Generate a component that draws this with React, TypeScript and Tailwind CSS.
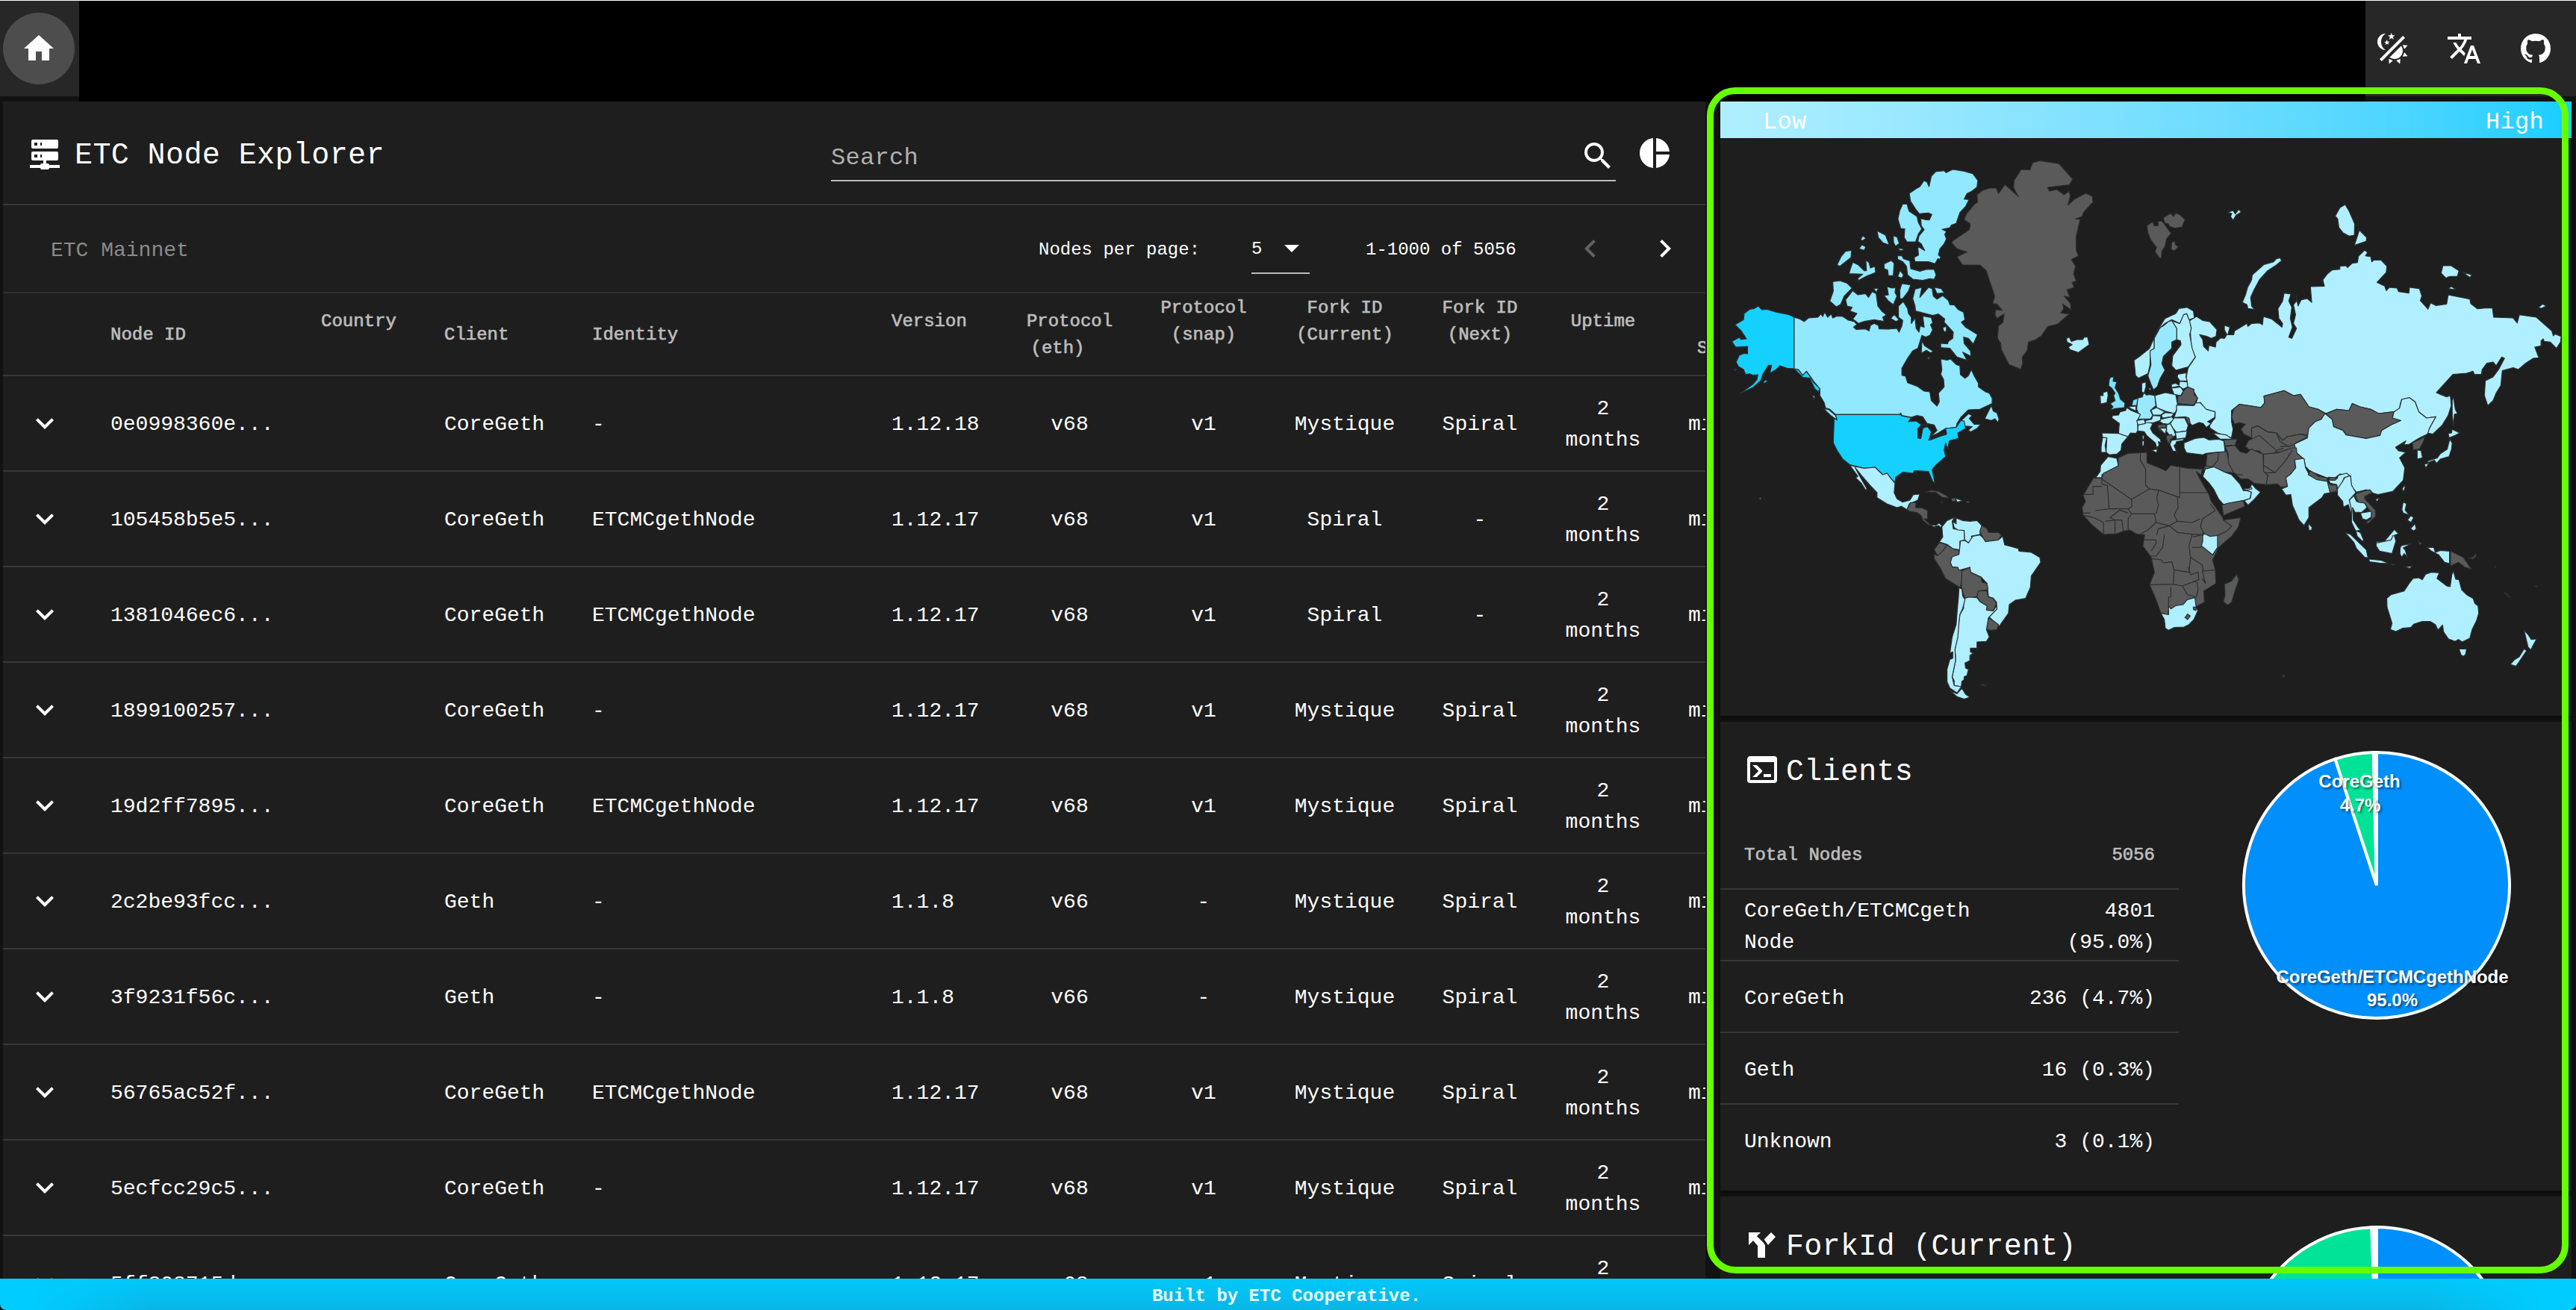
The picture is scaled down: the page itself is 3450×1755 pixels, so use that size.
import React from "react";

const ICONS = {
  home: "M10,20V14H14V20H19V12H22L12,3L2,12H5V20H10Z",
  theme:
    "M7.5,2C5.71,3.15 4.5,5.18 4.5,7.5C4.5,9.82 5.71,11.85 7.53,13C4.46,13 2,10.54 2,7.5A5.5,5.5 0 0,1 7.5,2M19.07,3.5L20.5,4.93L4.93,20.5L3.5,19.07L19.07,3.5M12.89,5.93L11.41,5L9.97,6L10.39,4.3L9,3.24L10.75,3.12L11.33,1.47L12,3.1L13.73,3.13L12.38,4.26L12.89,5.93M9.59,9.54L8.43,8.81L7.31,9.59L7.65,8.27L6.56,7.44L7.92,7.35L8.37,6.06L8.88,7.33L10.24,7.36L9.19,8.23L9.59,9.54M19,13.5A5.5,5.5 0 0,1 13.5,19C12.28,19 11.15,18.6 10.24,17.93L17.93,10.24C18.6,11.15 19,12.28 19,13.5M14.6,20.08L17.37,18.93L17.13,22.28L14.6,20.08M18.93,17.38L20.08,14.61L22.28,17.15L18.93,17.38M20.08,12.42L18.94,9.64L22.28,9.88L20.08,12.42M9.63,18.93L12.4,20.08L9.87,22.27L9.63,18.93Z",
  translate:
    "M12.87,15.07L10.33,12.56L10.36,12.53C12.1,10.59 13.34,8.36 14.07,6H17V4H10V2H8V4H1V6H12.17C11.5,7.92 10.44,9.75 9,11.35C8.07,10.32 7.3,9.19 6.69,8H4.69C5.42,9.63 6.42,11.17 7.67,12.56L2.58,17.58L4,19L9,14L12.11,17.11L12.87,15.07M18.5,10H16.5L12,22H14L15.12,19H19.87L21,22H23L18.5,10M15.88,17L17.5,12.67L19.12,17H15.88Z",
  github:
    "M12,2A10,10 0 0,0 2,12C2,16.42 4.87,20.17 8.84,21.5C9.34,21.58 9.5,21.27 9.5,21C9.5,20.77 9.5,20.14 9.5,19.31C6.73,19.91 6.14,17.97 6.14,17.97C5.68,16.81 5.03,16.5 5.03,16.5C4.12,15.88 5.1,15.9 5.1,15.9C6.1,15.97 6.63,16.93 6.63,16.93C7.5,18.45 8.97,18 9.54,17.76C9.63,17.11 9.89,16.67 10.17,16.42C7.95,16.17 5.62,15.31 5.62,11.5C5.62,10.39 6,9.5 6.65,8.79C6.55,8.54 6.2,7.5 6.75,6.15C6.75,6.15 7.59,5.88 9.5,7.17C10.29,6.95 11.15,6.84 12,6.84C12.85,6.84 13.71,6.95 14.5,7.17C16.41,5.88 17.25,6.15 17.25,6.15C17.8,7.5 17.45,8.54 17.35,8.79C18,9.5 18.38,10.39 18.38,11.5C18.38,15.32 16.04,16.16 13.81,16.41C14.17,16.72 14.5,17.33 14.5,18.26C14.5,19.6 14.5,20.68 14.5,21C14.5,21.27 14.66,21.59 15.17,21.5C19.14,20.16 22,16.42 22,12A10,10 0 0,0 12,2Z",
  server:
    "M13,19H14A1,1 0 0,1 15,20H22V22H15A1,1 0 0,1 14,23H10A1,1 0 0,1 9,22H2V20H9A1,1 0 0,1 10,19H11V17H4A1,1 0 0,1 3,16V12A1,1 0 0,1 4,11H20A1,1 0 0,1 21,12V16A1,1 0 0,1 20,17H13V19M4,3H20A1,1 0 0,1 21,4V8A1,1 0 0,1 20,9H4A1,1 0 0,1 3,8V4A1,1 0 0,1 4,3M9,7H10V5H9V7M9,15H10V13H9V15M5,5V7H7V5H5M5,13V15H7V13H5Z",
  search:
    "M15.5 14h-.79l-.28-.27C15.41 12.59 16 11.11 16 9.5 16 5.91 13.09 3 9.5 3S3 5.91 3 9.5 5.91 16 9.5 16c1.61 0 3.09-.59 4.23-1.57l.27.28v.79l5 4.99L20.49 19l-4.99-5zm-6 0C7.01 14 5 11.99 5 9.5S7.01 5 9.5 5 14 7.01 14 9.5 11.99 14 9.5 14z",
  pie: "M11 2v20c-5.07-.5-9-4.79-9-10s3.93-9.5 9-10zm2.03 0v8.99H22c-.47-4.74-4.24-8.52-8.97-8.99zm0 11.01V22c4.74-.47 8.5-4.25 8.97-8.99h-8.97z",
  drop: "M7 10l5 5 5-5z",
  left: "M15.41 16.59L10.83 12l4.58-4.59L14 6l-6 6 6 6 1.41-1.41z",
  right: "M8.59 16.59L13.17 12 8.59 7.41 10 6l6 6-6 6-1.41-1.41z",
  down: "M7.41 8.59L12 13.17l4.59-4.58L18 10l-6 6-6-6 1.41-1.41z",
  console:
    "M20,19V7H4V19H20M20,3A2,2 0 0,1 22,5V19A2,2 0 0,1 20,21H4A2,2 0 0,1 2,19V5C2,3.89 2.9,3 4,3H20M13,17V15H18V17H13M9.58,13L5.57,9H8.4L11.7,12.3C12.09,12.69 12.09,13.33 11.7,13.72L8.42,17H5.59L9.58,13Z",
  fork: "M3,4V12.5L6,9.5L9,13V21H14V13C14,11 8.5,7 8.5,6.5L11,4H3M18,4L13.3,8.7L16,12.5L21,7L18,4Z",
};

function Icon({ name, className = "" }: { name: keyof typeof ICONS; className?: string }) {
  return (
    <svg viewBox="0 0 24 24" className={`size-12 shrink-0 fill-current ${className}`}>
      <path d={ICONS[name]} />
    </svg>
  );
}

const LOW = "#b0efff";
const SWE = "#98e9ff";
const CAN = "#91e8ff";
const UK = "#7de3ff";
const TOP = "#14d1ff";
const NONE = "#5a5a5a";
const SEA = "#1e1e1e";

type Shape = [string, string];

// Each region keeps its own coordinate system; the transforms below place them on the map.
const NORTH_AMERICA: Shape[] = [
  [TOP, "170,690 182,705 200,703 235,715 275,724 295,735 295,942 270,940 245,930 232,945 210,960 216,928 205,928 185,965 178,990 150,1018 105,1042 150,1005 165,985 168,966 150,968 140,962 125,965 118,945 100,933 92,915 103,888 120,880 132,882 132,852 90,855 77,832 105,815 108,824 128,822 110,790 88,765 118,745 120,720 140,703 155,700"],
  [TOP, "295,942 310,946 325,968 338,952 350,972 365,1000 385,1020 380,1035 367,1022 350,980 325,976"],
  [TOP, "187,995 197,985 201,993 190,1001"],
  [TOP, "358,1048 368,1052 364,1066"],
  [TOP, "84,942 93,944 90,950"],
  [CAN, "295,735 315,742 330,752 345,738 378,735 388,722 395,732 402,714 412,735 425,722 430,738 445,730 465,732 485,747 505,752 515,764 503,775 512,784 545,782 557,790 562,768 575,760 590,768 592,782 625,783 655,780 662,795 672,770 675,748 660,735 660,690 677,672 692,700 695,720 705,735 705,760 718,738 722,780 732,795 736,770 750,775 745,730 775,736 780,758 772,765 780,785 770,808 755,815 742,808 728,860 710,870 692,900 672,940 672,968 685,972 692,998 725,1012 750,1032 770,1035 775,1070 795,1092 803,1075 800,1040 820,1015 818,985 808,965 812,945 808,903 830,907 843,903 862,925 875,930 877,965 893,980 905,970 915,945 925,970 940,1000 940,1015 965,1035 978,1040 988,1060 988,1082 960,1097 945,1105 905,1107 880,1135 865,1162 862,1178 825,1182 800,1200 772,1215 795,1190 785,1168 760,1162 745,1135 725,1130 705,1137 672,1130 668,1120 664,1126 440,1126 420,1105 405,1100 400,1078 385,1050 385,1022 365,995 350,970 338,952 325,968 310,945 295,942"],
  [CAN, "398,1102 415,1106 440,1130 446,1150 425,1132"],
  [CAN, "880,1150 905,1123 918,1130 908,1142 925,1165 948,1165 935,1182 912,1196 905,1188 918,1175 890,1172"],
  [CAN, "985,1090 992,1112 1005,1120 1012,1145 1008,1158 998,1143 985,1150 962,1143 972,1120"],
  [CAN, "850,141 890,148 920,158 938,185 935,212 915,230 900,238 890,260 907,262 895,290 875,315 862,358 845,365 840,375 813,382 828,390 822,402 828,420 820,440 805,460 800,485 808,492 805,502 798,500 788,520 765,512 718,512 715,495 730,485 728,450 752,467 740,440 728,430 732,408 750,383 740,368 738,338 755,343 768,344 777,322 765,316 733,319 720,300 702,268 698,237 720,220 735,210 750,185 760,192 767,210 775,168 790,150 820,146 827,154"],
  [CAN, "675,280 690,280 697,308 725,330 730,355 742,380 730,400 720,432 690,432 680,415 682,380 668,378 658,340 665,305"],
  [CAN, "585,388 615,405 628,445 605,435 590,415"],
  [CAN, "642,408 655,412 663,438 650,450 643,435"],
  [CAN, "660,458 677,460 676,467 662,465"],
  [CAN, "535,408 547,418 532,428 528,422"],
  [CAN, "532,443 546,452 540,466 522,460"],
  [CAN, "475,470 496,466 494,495 455,530 445,525 460,490"],
  [CAN, "500,514 520,525 540,548 548,548 546,505 557,515 562,537 578,530 580,555 548,570 520,587 518,578 535,562 487,560 492,540"],
  [CAN, "610,520 635,507 645,518 642,568 625,568 622,545 610,540"],
  [CAN, "666,547 678,565 672,578 657,572"],
  [CAN, "657,487 672,488 678,500 700,508 703,540 735,550 760,542 785,543 792,565 785,583 770,580 745,587 710,582 692,565 688,530 675,512 657,502"],
  [CAN, "430,592 455,588 480,598 498,618 470,650 458,683 442,693 420,670 432,630"],
  [CAN, "500,628 518,645 545,640 555,655 568,632 582,640 588,690 603,712 618,725 605,735 610,752 575,745 540,752 520,760 500,742 515,720 490,710 498,695 480,690 475,665"],
  [CAN, "620,612 638,618 650,615 648,635 655,650 642,685 625,670 610,648 625,645"],
  [CAN, "672,600 703,605 695,630 675,660 665,660 665,625"],
  [CAN, "573,620 590,618 583,635"],
  [CAN, "633,740 645,723 662,745 652,752"],
  [CAN, "718,622 742,615 735,655 765,615 778,620 782,650 795,662 815,648 835,668 840,685 855,685 870,705 888,715 893,745 880,755 895,775 937,805 922,843 905,820 888,815 890,840 912,870 914,892 885,875 900,908 865,895 840,860 808,857 808,840 832,842 835,832 850,820 852,795 820,755 822,742 800,722 780,728 720,710 718,690 710,660"],
  [CAN, "785,615 810,620 820,637 795,640"],
  [CAN, "742,830 752,850 782,872 772,878 758,868 740,880"],
  [CAN, "815,778 828,770 828,790 820,795"],
  [CAN, "760,900 772,892 766,904"],
  [NONE, "1155,106 1222,118 1270,180 1258,203 1182,213 1188,228 1215,222 1240,243 1256,228 1262,245 1253,285 1275,262 1315,237 1338,248 1341,272 1310,310 1302,330 1280,340 1296,342 1282,410 1282,465 1290,488 1265,503 1280,530 1273,560 1282,590 1268,595 1275,615 1250,625 1260,655 1240,650 1262,680 1264,705 1235,682 1238,702 1228,718 1258,722 1218,762 1183,772 1160,810 1140,825 1115,835 1110,870 1093,895 1095,920 1088,944 1047,925 1020,865 1018,840 1007,820 1010,770 1026,755 1030,722 1018,730 1005,740 998,725 1000,705 1024,708 1005,682 990,680 997,650 975,575 967,547 945,525 885,525 865,492 900,473 865,460 847,437 850,428 908,383 912,360 890,343 898,320 925,282 937,272 935,243 955,225 980,216 1002,216 1010,238 1033,202 1080,250 1063,215 1065,185 1090,141 1120,143 1130,114"],
  [LOW, "1248,820 1258,815 1265,832 1285,825 1305,825 1310,815 1322,814 1328,845 1290,877 1260,865 1255,855 1268,845 1250,835"],
];

const AMERICAS: Shape[] = [
  [TOP, "440,-14 668,-14 672,-8 705,-2 695,15 722,12 740,26 728,45 728,80 738,83 745,40 762,35 775,55 768,85 795,78 828,60 825,42 862,38 878,10 890,12 895,42 868,60 870,82 838,92 832,125 825,100 820,128 825,155 790,190 778,208 788,262 780,255 765,215 745,213 715,212 712,222 675,218 650,238 648,260 635,245 620,222 605,228 578,198 540,202 490,188 465,165 445,130 432,100 435,0 445,8"],
  [SEA, "765,88 798,66 828,60 828,66 798,76 772,88"],
  [SEA, "728,42 750,24 765,28 745,40 740,75 730,80"],
  [TOP, "173,321 179,321 179,327 174,327"],
  [LOW, "490,190 540,202 578,198 605,228 620,222 635,245 648,262 645,300 655,325 675,338 700,330 712,308 735,306 728,330 705,342 698,345 690,368 670,355 655,360 620,345 585,320 585,300 560,270 530,230 508,198 520,225 550,285 545,290 530,262 510,240 518,234"],
  [NONE, "690,368 700,345 702,340 722,340 720,360 745,362 762,372 762,405 750,405 770,428 765,430 745,410 740,392 725,380 700,375"],
  [LOW, "768,428 790,432 802,422 812,432 808,440 800,432 785,438"],
  [NONE, "755,298 775,290 800,295 832,315 835,322 812,318 790,298"],
  [NONE, "845,322 860,322 860,335 848,335"],
  [LOW, "860,322 885,333 865,338"],
  [LOW, "897,336 907,336 907,340 897,340"],
  [NONE, "806,336 818,338 812,341"],
  [LOW, "858,398 848,415 852,445 890,452 892,490 875,495 875,530 850,525 830,508 803,498 815,478 812,438 830,412"],
  [LOW, "862,402 885,412 910,415 935,412 952,432 945,468 915,475 920,490 905,502 892,490 890,452 868,450 855,440 850,415 862,425"],
  [NONE, "952,432 970,445 975,460 1010,460 1020,470 1010,490 965,497 955,480 945,455"],
  [NONE, "803,500 830,510 815,535 797,553 785,530"],
  [NONE, "830,510 850,525 872,532 872,548 848,560 842,580 850,600 868,600 882,615 882,650 876,682 825,645 805,600 785,565 785,548 797,553 815,535"],
  [LOW, "945,470 955,480 965,497 1010,490 1025,475 1032,510 1050,515 1080,525 1082,535 1125,540 1155,560 1158,580 1125,635 1122,680 1105,725 1070,732 1048,750 1045,785 1012,838 978,800 1005,765 1003,740 992,725 975,718 970,665 950,640 912,620 910,600 872,612 868,600 848,598 842,580 848,558 872,548 877,495 892,492 905,502 920,475"],
  [NONE, "882,615 910,600 912,620 950,640 952,660 970,665 973,690 940,695 935,718 920,722 893,725 885,700 880,675"],
  [NONE, "940,695 970,695 973,718 992,725 1003,745 992,775 968,772 970,755 945,738 935,718"],
  [NONE, "978,803 1010,830 1005,850 985,853 968,850 970,820"],
  [LOW, "893,725 905,720 935,722 945,738 970,755 968,772 992,775 1003,755 1005,768 975,803 968,850 978,880 968,898 935,900 935,925 912,925 912,940 922,945 910,955 910,975 893,985 895,1005 905,1010 900,1035 890,1040 890,1052 882,1058 880,1080 855,1075 855,1055 848,1040 860,975 858,930 865,870 875,790 888,765 888,740"],
  [LOW, "872,682 882,688 885,715 893,730 885,765 875,790 872,820 868,880 858,930 860,975 848,1040 855,1075 880,1080 865,1105 840,1085 830,1060 830,1010 840,970 850,965 850,940 840,945 848,880 862,830 866,770 870,720"],
  [LOW, "840,1095 865,1108 882,1086 895,1110 910,1122 890,1130 865,1120"],
  [NONE, "948,1075 955,1068 962,1074 970,1070 964,1078 956,1074"],
];

const EURASIA: Shape[] = [
  [NONE, "182,187 200,172 205,187 218,187 218,170 230,168 260,218 245,240 240,270 230,290 228,318 222,315 208,292 213,275 195,245 185,215"],
  [NONE, "235,155 258,138 268,150 275,136 290,145 305,163 295,192 272,197 255,190 250,178 240,178"],
  [NONE, "262,255 270,248 275,265 284,272 270,288 260,282"],
  [LOW, "443,133 460,126 467,140 478,122 487,132 470,145 460,165 452,150 456,138"],
  [LOW, "600,320 612,316 617,328 600,345 570,370 545,405 528,445 517,475 520,510 530,524 508,520 505,505 490,495 500,465 507,435 520,405 522,385 560,343 590,333"],
  [LOW, "822,102 835,128 853,180 852,225 835,229 815,215 802,195 798,160 790,148 805,115"],
  [LOW, "868,205 892,235 890,250 852,266"],
  [LOW, "1138,348 1165,348 1190,368 1185,390 1158,392 1148,398 1132,378"],
  [LOW, "1200,373 1232,385 1225,395"],
  [LOW, "1155,440 1165,430 1180,445"],
  [LOW, "1447,515 1460,502 1472,510 1455,520"],
  [LOW, "342,552 362,568 385,573 408,605 405,632 390,640 375,632 352,625 362,645 365,672 380,690 382,668 403,675 405,655 420,638 432,640 440,625 432,605 432,587 450,595 443,625 462,625 465,610 505,580 508,592 520,580 545,578 555,585 558,552 585,562 618,595 620,580 608,560 605,520 620,490 625,458 647,462 640,490 650,515 645,560 652,595 640,635 650,640 665,600 655,580 662,545 655,505 665,490 663,465 670,510 680,485 700,480 714,495 710,432 755,430 750,405 765,380 780,365 805,362 805,350 825,348 830,355 845,338 862,335 865,310 885,285 895,295 888,308 905,312 908,332 915,325 938,325 957,350 955,375 925,415 950,430 955,448 965,435 990,438 995,452 1028,458 1030,435 1062,440 1070,470 1065,488 1090,522 1098,497 1115,508 1150,502 1155,465 1225,482 1228,500 1250,521 1275,518 1298,518 1302,555 1365,558 1378,578 1385,545 1440,555 1490,610 1495,630 1500,622 1520,632 1518,655 1505,680 1485,655 1465,652 1462,642 1455,650 1455,670 1435,675 1448,718 1430,720 1405,740 1382,765 1365,758 1330,770 1325,830 1310,860 1300,890 1283,910 1272,870 1275,810 1300,795 1318,765 1337,720 1328,715 1310,750 1300,735 1280,740 1265,765 1262,785 1240,785 1235,772 1215,780 1170,785 1117,858 1130,865 1150,875 1162,870 1165,910 1155,950 1135,990 1105,1025 1088,1020 1095,1000 1115,955 1085,960 1060,935 1048,895 1030,880 1005,885 1000,905 998,925 980,935 930,942 905,925 870,915 845,902 835,930 795,925 760,942 735,925 705,915 678,865 655,870 625,850 560,872 562,900 550,918 510,910 480,905 455,930 455,975 460,1005 455,1040 410,1020 385,1000 385,985 402,960 402,938 370,925 355,898 340,905 345,880 330,845 312,838 308,800 315,758 338,715 325,680 322,610 318,570"],
  [LOW, "298,545 310,540 318,560 325,600 320,625 328,680 338,715 315,755 275,768 262,750 265,710 292,665 290,650 278,645 278,600 262,570 288,580"],
  [SWE, "262,568 278,600 278,645 262,655 262,680 235,712 230,742 240,768 225,800 215,835 203,847 195,825 185,790 195,745 190,690 205,680 205,640 225,595 235,590 252,572"],
  [LOW, "285,520 312,515 332,530 335,558 318,565 310,540 300,545 288,580 262,565 240,580 222,600 205,640 205,680 192,690 192,745 185,782 155,800 145,790 140,728 160,710 190,680 215,610 240,560 275,540"],
  [NONE, "480,905 550,918 562,900 560,872 625,850 655,870 678,865 705,915 735,925 757,942 745,965 725,975 705,1000 705,1030 680,1025 635,1035 620,1055 590,1020 570,1015 540,992 520,1000 520,1040 495,1025 485,1005 500,985 480,978 465,985 455,955 462,925"],
  [NONE, "760,942 795,925 835,930 845,902 870,915 905,925 930,942 980,935 975,960 1002,970 975,985 940,1010 935,1030 890,1042 825,1028 815,1010 785,995 780,965"],
  [NONE, "500,1075 510,1050 520,1045 520,1000 540,992 570,1015 600,1020 620,1050 635,1035 680,1025 705,1033 660,1062 665,1095 680,1120 650,1115 600,1095 565,1120 545,1092 515,1090"],
  [LOW, "757,942 780,965 785,995 815,1010 825,1028 890,1042 935,1030 940,1010 975,985 1002,970 975,960 980,935 998,920 1005,885 1030,878 1048,895 1060,935 1085,960 1115,955 1095,1000 1088,1025 1060,1042 1030,1065 1012,1068 1018,1052 985,1078 995,1092 1018,1098 998,1120 1015,1160 1010,1210 976,1255 928,1268 907,1260 891,1248 859,1258 838,1230 832,1190 806,1185 790,1200 763,1200 710,1175 694,1155 689,1125 665,1100 658,1065 700,1040 705,1000 725,975 745,965"],
  [NONE, "1040,1060 1065,1045 1080,1035 1075,1055 1062,1085 1042,1088"],
  [LOW, "1055,1088 1068,1092 1072,1120 1055,1125"],
  [LOW, "1160,1045 1168,1060 1166,1085 1158,1115 1130,1125 1118,1142 1110,1130 1088,1140 1090,1132 1120,1120 1130,1103 1152,1085"],
  [LOW, "1078,1145 1092,1142 1083,1162"],
  [LOW, "1168,1005 1192,1020 1178,1030 1158,1040 1155,1022 1166,1020"],
  [LOW, "1172,875 1178,925 1185,942 1175,945 1172,990 1168,950 1168,890"],
];

const EUROPE: Shape[] = [
  [UK, "80,76 93,75 90,92 105,95 98,118 112,140 120,165 138,180 135,198 100,202 78,208 90,195 78,182 98,170 92,150 98,140 85,120 72,110 75,85"],
  [LOW, "50,138 68,132 70,150 65,178 40,184 38,150 50,150"],
  [LOW, "205,100 222,95 222,115 215,140 205,135"],
  [LOW, "230,120 243,120 240,130"],
  [SWE, "213,138 225,148 235,145 258,150 262,190 240,210 250,230 240,243 190,245 195,228 185,205 188,160 208,155"],
  [UK, "170,168 190,160 185,190 165,190"],
  [LOW, "152,195 182,192 182,212 160,202"],
  [LOW, "145,198 160,208 200,225 188,250 190,290 182,302 160,300 150,315 112,303 115,262 85,240 88,230 112,228 118,215 140,210"],
  [LOW, "45,300 112,302 150,315 125,345 122,370 105,385 75,388 62,378 65,320 48,318"],
  [LOW, "48,318 65,320 58,350 62,378 42,378 42,355"],
  [LOW, "190,268 225,255 250,262 240,282 250,300 280,325 283,340 272,335 275,350 265,360 260,340 225,310 215,295 190,292"],
  [LOW, "245,368 268,365 265,380"],
  [LOW, "207,310 214,310 214,325 208,325"],
  [LOW, "207,332 215,332 214,352 207,352"],
  [LOW, "185,250 215,245 220,262 190,268"],
  [LOW, "220,250 245,245 250,230 282,232 280,250 250,260 220,258"],
  [LOW, "242,208 265,198 298,215 282,228 250,228"],
  [LOW, "258,150 300,138 342,146 350,190 342,215 335,222 298,212 265,198 262,180"],
  [LOW, "284,228 300,218 335,222 325,235 288,240"],
  [LOW, "282,245 325,235 335,245 312,265 290,262 278,255"],
  [NONE, "268,268 300,265 304,278 280,280 300,305 275,288"],
  [LOW, "276,281 305,280 300,305"],
  [LOW, "305,268 320,262 335,290 342,310 325,318 305,295"],
  [LOW, "335,240 378,240 392,270 385,292 345,298 330,280 320,262"],
  [NONE, "378,235 395,238 402,258 392,265 388,250"],
  [LOW, "340,298 388,292 382,320 345,325"],
  [NONE, "303,312 325,306 332,320 320,325 318,345 308,335"],
  [LOW, "318,345 325,330 375,322 372,330 345,335 342,345 335,350 345,375 330,372 322,355"],
  [LOW, "345,188 415,190 422,180 440,178 465,205 500,215 498,238 470,255 485,262 465,278 452,262 435,258 408,270 400,262 395,240 380,235 335,238 345,210"],
  [NONE, "365,150 372,132 390,115 415,125 415,145 430,160 415,188 350,182 350,152"],
  [LOW, "325,120 362,115 372,132 362,150 335,145"],
  [LOW, "325,105 340,100 355,108 358,92 388,95 390,115 372,124 355,112 325,118"],
  [LOW, "350,64 385,58 383,75 388,92 358,90 348,75"],
  [LOW, "375,340 420,322 455,318 475,328 515,325 535,332 540,375 500,378 465,382 450,388 420,384 385,380 375,360"],
  [LOW, "490,300 545,308 570,325 520,325"],
  [NONE, "535,328 575,325 588,325 582,345 576,355 565,350 540,352"],
  [LOW, "70,395 105,402 112,432 80,450 45,468 45,480 20,480 38,455 40,430"],
];

const SOUTH: Shape[] = [
  [NONE, "175,40 205,22 240,20 262,18 262,60 290,75 320,92 335,70 385,82 430,85 428,110 412,95 430,140 450,185 458,215 492,278 495,290 548,280 540,320 520,355 480,400 470,430 462,450 470,490 472,545 435,575 437,620 415,635 375,650 330,645 325,672 305,665 290,610 270,550 285,500 275,440 250,395 255,350 230,346 210,330 190,335 170,345 130,348 95,310 68,270 65,240 75,215 68,190 100,120 125,120 130,102 175,72"],
  [LOW, "328,634 335,647 350,634 372,630 385,610 408,602 412,640 417,655 405,690 390,710 375,720 345,722 328,733 318,725 315,690 305,665 328,670"],
  [NONE, "386,668 394,676 386,690 378,682"],
  [NONE, "403,640 413,640 411,654 404,650"],
  [LOW, "432,343 442,348 455,356 477,352 477,400 462,430 428,394 432,375"],
  [NONE, "535,508 542,530 530,575 520,620 508,632 495,618 500,590 498,548 520,535"],
  [NONE, "445,25 478,18 505,15 510,45 522,65 528,100 500,98 465,78 440,102 435,85 442,70"],
  [NONE, "500,-5 530,-10 545,15 565,22 580,5 615,25 617,70 630,110 628,148 590,143 570,125 548,125 525,97 510,60 510,25"],
  [NONE, "617,25 660,20 705,0 717,0 718,20 738,45 712,60 715,80 700,105 685,120 690,155 670,158 660,145 625,148 630,110 617,95"],
  [LOW, "440,85 465,76 500,98 520,108 545,145 555,170 580,175 576,205 555,212 495,228 480,205 465,165 450,140 432,115"],
  [NONE, "490,230 510,222 555,212 560,235 495,272"],
  [LOW, "555,165 575,162 582,145 592,162 608,178 590,205 570,230 558,212 577,203 580,178"],
  [LOW, "712,48 740,42 745,80 755,105 780,125 812,135 815,150 820,180 802,185 795,200 755,240 755,280 740,312 725,290 705,230 700,188 685,190 672,165 690,155 685,120 700,105 715,80"],
  [LOW, "815,128 840,125 845,110 870,102 882,115 862,120 858,140 842,165 840,148 820,142"],
  [NONE, "760,92 785,115 810,120 812,135 780,128 753,108"],
  [NONE, "815,118 838,120 835,130 820,130"],
  [NONE, "812,140 825,150 838,148 842,178 835,175 820,180"],
  [LOW, "753,302 765,320 763,330 755,332"],
  [LOW, "865,118 882,112 885,150 898,180 878,210 885,235 885,270 875,228 860,238 858,215 842,190 842,165 855,140"],
  [LOW, "878,210 892,192 900,215 925,222 932,240 915,260 895,258 888,240 890,290 905,320 912,330 898,335 885,300 885,250"],
  [NONE, "895,190 902,182 940,168 948,180 925,195 925,205 957,250 958,275 935,305 930,298 945,285 945,262 925,222 905,218"],
  [LOW, "912,262 945,255 945,278 930,290 918,285"],
  [LOW, "898,333 912,340 923,375 915,372 902,355"],
  [LOW, "958,205 970,203 962,217"],
  [LOW, "1047,148 1048,158 1043,178 1039,165"],
  [LOW, "865,340 882,348 930,410 935,442 925,440 900,405 892,380"],
  [LOW, "937,447 975,452 1000,465 970,463 940,458"],
  [LOW, "1005,466 1015,467 1015,471 1005,470"],
  [LOW, "1045,478 1070,475 1062,484"],
  [LOW, "960,378 985,375 1015,328 1028,345 1015,352 1020,375 1008,425 970,415 960,395"],
  [LOW, "1033,400 1038,392 1068,385 1042,402 1048,410 1055,440 1045,425 1038,440 1032,425"],
  [LOW, "1042,216 1052,225 1048,250 1060,270 1042,262 1038,248"],
  [LOW, "1055,290 1065,272 1074,280 1066,300"],
  [LOW, "1064,325 1078,305 1082,325 1074,334"],
  [LOW, "1090,375 1097,385 1092,390"],
  [LOW, "1115,400 1135,400 1140,420 1155,412 1183,415 1183,465 1168,460 1150,430 1128,415"],
  [NONE, "1186,415 1225,440 1250,488 1230,480 1210,460 1186,475"],
  [NONE, "1240,442 1255,440 1262,425 1264,435 1255,447"],
  [LOW, "1127,500 1152,502 1145,525 1175,555 1185,558 1190,510 1195,495 1202,528 1212,530 1220,570 1235,590 1255,605 1260,625 1270,635 1272,665 1265,695 1252,730 1245,765 1222,780 1210,770 1200,778 1180,768 1165,740 1162,712 1148,732 1140,710 1125,698 1100,698 1075,708 1065,722 1040,725 1020,738 1003,730 1008,705 993,640 992,605 1005,590 1045,575 1060,545 1072,525 1090,522 1100,530 1110,508"],
  [LOW, "1212,808 1235,808 1232,830 1225,838 1218,832"],
  [LOW, "1410,733 1422,750 1432,770 1448,768 1430,812 1422,800"],
  [LOW, "1410,808 1418,815 1395,860 1385,878 1368,870 1380,852 1395,840"],
  [NONE, "675,912 683,918 676,922"],
  [NONE, "1350,582 1354,582 1368,601 1364,600"],
  [NONE, "1443,556 1450,554 1449,560"],
  [NONE, "1320,474 1324,478 1321,481"],
];

const SOUTH_BORDERS =
  "M125,125L215,207L270,165L258,150L258,85L242,50L242,22M270,165L298,170L362,200L362,80M362,180H447M298,170L292,200L297,230L290,265M215,207L217,235L205,245L147,245L142,152L125,145V122H100M68,187H98V155H125M205,245L215,265L285,265L290,300L330,313L355,295L345,270L357,240L355,200M290,300L265,330L245,345M105,252L147,245M130,348V300L100,280L70,272M68,262H90M165,345V290L135,295M165,290L150,280L180,250L205,262M190,335L186,290L165,290M205,332V285L215,265M292,350L297,325L330,313L355,340L400,347M400,347L390,395L395,440L390,500L345,490L338,458L312,462L305,450L275,445M315,350L310,400L290,435L272,435M252,370H290V385L275,415M400,347L435,350M402,358L436,348L425,315L432,285L470,252L455,225M355,295L400,300L425,285M495,290L520,315L505,335L477,352M400,400H428M395,440L430,470L435,495L472,490M345,490L342,548L272,550M342,548L370,555L420,530L418,500L395,510L388,480M335,560V600H328V645M370,555L385,590L412,600L418,570L415,540L400,538M430,490L440,545L430,525M440,70L460,78L478,50L480,18M617,70L652,100L685,50L705,8M620,100L652,100M895,185L905,218M940,200L925,205M962,382L1005,370L1012,350M575,150L582,165L555,172M555,110L528,104";

const NORTH_BORDERS =
  "M520,1045L545,1030L600,1090L622,1082M570,1015L600,1020L612,1055L640,1075L662,1062M612,1075L650,1072M600,1095V1120";

function Layer({ shapes, transform, borders }: { shapes: Shape[]; transform: string; borders?: string }) {
  return (
    <g transform={transform}>
      {shapes.map(([fill, points], i) => (
        <polygon key={i} points={points} fill={fill} vectorEffect="non-scaling-stroke" />
      ))}
      {borders && <path d={borders} fill="none" vectorEffect="non-scaling-stroke" />}
    </g>
  );
}

function WorldMap() {
  return (
    <svg viewBox="0 0 1140 774" className="h-[774px] w-[1140px]" stroke="#2b2f31" strokeWidth="1.2" strokeLinejoin="round">
      <Layer shapes={NORTH_AMERICA} transform="translate(-14 -5) scale(.38265 .33333)" />
      <Layer shapes={AMERICAS} transform="translate(-14 375) scale(.38265 .33333)" />
      <Layer shapes={EURASIA} borders={NORTH_BORDERS} transform="translate(496 55) scale(.41454 .33333)" />
      <Layer shapes={EUROPE} transform="translate(496 295) scale(.33333)" />
      <Layer shapes={SOUTH} borders={SOUTH_BORDERS} transform="translate(456 415) scale(.44005 .33333)" />
    </svg>
  );
}

const COLS =
  "grid grid-cols-[144px_282px_165px_198px_401px_168px_141px_218px_160px_202px_128px_1fr] items-center border-b-2 border-[#373737]";

const NODES = [
  ["0e0998360e...", "CoreGeth", "-", "1.12.18", "v68", "v1", "Mystique", "Spiral"],
  ["105458b5e5...", "CoreGeth", "ETCMCgethNode", "1.12.17", "v68", "v1", "Spiral", "-"],
  ["1381046ec6...", "CoreGeth", "ETCMCgethNode", "1.12.17", "v68", "v1", "Spiral", "-"],
  ["1899100257...", "CoreGeth", "-", "1.12.17", "v68", "v1", "Mystique", "Spiral"],
  ["19d2ff7895...", "CoreGeth", "ETCMCgethNode", "1.12.17", "v68", "v1", "Mystique", "Spiral"],
  ["2c2be93fcc...", "Geth", "-", "1.1.8", "v66", "-", "Mystique", "Spiral"],
  ["3f9231f56c...", "Geth", "-", "1.1.8", "v66", "-", "Mystique", "Spiral"],
  ["56765ac52f...", "CoreGeth", "ETCMCgethNode", "1.12.17", "v68", "v1", "Mystique", "Spiral"],
  ["5ecfcc29c5...", "CoreGeth", "-", "1.12.17", "v68", "v1", "Mystique", "Spiral"],
  ["5ff808715d...", "CoreGeth", "-", "1.12.17", "v68", "v1", "Mystique", "Spiral"],
];

function NodeTable() {
  return (
    <div className="whitespace-nowrap">
      <div className={`${COLS} h-[111px] pt-[2px] text-[24px] leading-9 text-[#bcbcbc] [-webkit-text-stroke:0.7px_#bcbcbc]`}>
        <span />
        <span>Node ID</span>
        <span className="pb-9">Country</span>
        <span>Client</span>
        <span>Identity</span>
        <span className="pb-9">Version</span>
        <span className="text-center">
          Protocol
          <br />
          <span className="pr-8">(eth)</span>
        </span>
        <span className="pb-9 text-center">
          Protocol
          <br />
          (snap)
        </span>
        <span className="pb-9 text-center">
          Fork ID
          <br />
          (Current)
        </span>
        <span className="pb-9 text-center">
          Fork ID
          <br />
          (Next)
        </span>
        <span className="pb-9 text-center">Uptime</span>
        <span className="pt-9 pl-[62px]">Seen</span>
      </div>
      {NODES.map(([id, client, identity, version, eth, snap, current, next]) => (
        <div key={id} className={`${COLS} h-32 text-[28px] leading-[42px] text-white`}>
          <Icon name="down" className="ml-8" />
          <span className="pt-1">{id}</span>
          <span />
          <span className="pt-1">{client}</span>
          <span className="pt-1">{identity}</span>
          <span className="pt-1">{version}</span>
          <span className="pt-1 text-center">{eth}</span>
          <span className="pt-1 text-center">{snap}</span>
          <span className="pt-1 text-center">{current}</span>
          <span className="pt-1 text-center">{next}</span>
          <span className="pt-1 text-center">
            2<br />
            months
          </span>
          <span className="pt-1 pl-[50px]">minutes</span>
        </div>
      ))}
    </div>
  );
}

function NodePanel() {
  return (
    <section className="w-[2280px] shrink-0 overflow-hidden bg-[#1e1e1e]">
      <div className="flex h-[139px] items-start border-b-2 border-[#373737] text-white">
        <Icon name="server" className="mt-[45px] ml-8" />
        <h1 className="mt-[47px] ml-4 w-[1013px] text-[40px] leading-[52px] tracking-[0.4px]">ETC Node Explorer</h1>
        <div className="flex h-[107px] w-[1051px] justify-between border-b-2 border-[#bbbbbb]">
          <span className="mt-[56px] text-[32px] leading-10 tracking-[0.3px] text-[#b0b0b0]">Search</span>
          <Icon name="search" className="mt-[49px]" />
        </div>
        <Icon name="pie" className="mt-[45px] ml-7" />
      </div>
      <div className="flex h-[118px] items-center border-b-2 border-[#2f2f2f] text-white">
        <span className="w-[1323px] pt-1.5 pl-16 text-[28px] text-[#8a8a8a]">ETC Mainnet</span>
        <span className="w-[349px] pt-1 pl-16 text-[24px]">Nodes per page:</span>
        <div className="flex h-[68px] w-[78px] items-center justify-between border-b-2 border-[#bbbbbb] text-[24px]">
          <span className="pt-1">5</span>
          <Icon name="drop" />
        </div>
        <span className="w-[352px] pt-1 pl-[75px] text-[24px]">1-1000 of 5056</span>
        <Icon name="left" className="text-[#626262]" />
        <Icon name="right" className="ml-[52px]" />
      </div>
      <NodeTable />
    </section>
  );
}

type Slice = { value: number; color: string };

function Pie({ slices, labels }: { slices: Slice[]; labels?: React.ReactNode }) {
  const total = slices.reduce((sum, s) => sum + s.value, 0);
  const at = (v: number) => {
    const a = (v / total) * 2 * Math.PI;
    return `${200 + 178 * Math.sin(a)},${200 - 178 * Math.cos(a)}`;
  };
  let acc = 0;
  return (
    <svg viewBox="0 0 400 400" className="size-[400px] shrink-0">
      {slices.map(({ value, color }, i) => {
        const start = acc;
        acc += value;
        return (
          <path
            key={i}
            d={`M200,200L${at(start)}A178,178 0 ${value > total / 2 ? 1 : 0} 1 ${at(acc)}Z`}
            fill={color}
            stroke="#fff"
            strokeWidth="4"
          />
        );
      })}
      {labels}
    </svg>
  );
}

const CLIENTS = [
  ["CoreGeth/ETCMCgeth Node", "4801 (95.0%)"],
  ["CoreGeth", "236 (4.7%)"],
  ["Geth", "16 (0.3%)"],
  ["Unknown", "3 (0.1%)"],
];

const LABEL =
  "fill-white font-['Liberation_Sans',Arial,sans-serif] text-[24px] font-bold [text-shadow:2px_2px_3px_rgba(0,0,0,0.5)]";

function ClientsCard() {
  return (
    <section className="mt-2 flex h-[628px] shrink-0 bg-[#1e1e1e] text-white shadow-[0_4px_4px_rgba(0,0,0,0.4)]">
      <div className="w-[614px]">
        <div className="flex h-[131px] items-start pt-10 pl-8">
          <Icon name="console" />
          <h2 className="mt-0.5 ml-2 text-[40px] leading-[52px] tracking-[0.3px]">Clients</h2>
        </div>
        <div className="flex h-[94px] items-center justify-between border-b-2 border-[#373737] px-8 pt-1 text-[24px] text-[#bcbcbc] [-webkit-text-stroke:0.7px_#bcbcbc]">
          <span>Total Nodes</span>
          <span>5056</span>
        </div>
        {CLIENTS.map(([name, count]) => (
          <div
            key={name}
            className="flex h-24 items-center justify-between border-b-2 border-[#373737] pr-8 pl-8 pt-1.5 text-[28px] leading-[42px] last:border-transparent"
          >
            <span className="w-[310px]">{name}</span>
            <span className="w-[180px] text-right">{count}</span>
          </div>
        ))}
      </div>
      <div className="pt-[19px] pl-[65px]">
        <Pie
          slices={[
            { value: 4801, color: "#008ffb" },
            { value: 236, color: "#00e396" },
            { value: 16, color: "#feb019" },
            { value: 3, color: "#ff4560" },
          ]}
          labels={
            <g textAnchor="middle" className={LABEL}>
              <text x="177" y="69">CoreGeth</text>
              <text x="178" y="101">4.7%</text>
              <text x="221" y="331" textLength="311">CoreGeth/ETCMCgethNode</text>
              <text x="221" y="362">95.0%</text>
            </g>
          }
        />
      </div>
    </section>
  );
}

function ForkCard() {
  return (
    <section className="mt-2 flex h-[628px] shrink-0 bg-[#1e1e1e] text-white">
      <div className="flex w-[614px] items-start pt-10 pl-8">
        <Icon name="fork" />
        <h2 className="mt-0.5 ml-2 text-[40px] leading-[52px] tracking-[0.3px] whitespace-nowrap">ForkId (Current)</h2>
      </div>
      <div className="pt-[19px] pl-[65px]">
        <Pie
          slices={[
            { value: 640, color: "#008ffb" },
            { value: 354, color: "#00e396" },
            { value: 6, color: "#ffffff" },
          ]}
        />
      </div>
    </section>
  );
}

export default function App() {
  return (
    <div className="relative flex h-[1755px] w-[3450px] flex-col overflow-hidden bg-[#121212] font-['Liberation_Mono',monospace]">
      <header className="flex h-[136px] shrink-0 items-start border-t border-white bg-[#121212] text-white">
        <div className="flex h-32 w-[106px] items-center bg-[#272727] pl-1">
          <div className="flex size-24 items-center justify-center rounded-full bg-[#4d4d4d]">
            <Icon name="home" />
          </div>
        </div>
        <div className="h-full flex-1 bg-black" />
        <div className="flex h-32 w-[282px] items-center gap-12 bg-[#272727] pl-3">
          <Icon name="theme" />
          <Icon name="translate" />
          <Icon name="github" />
        </div>
      </header>
      <main className="flex h-[1577px] shrink-0 gap-5 overflow-hidden pl-1">
        <NodePanel />
        <aside className="flex w-[1140px] flex-col">
          <section className="h-[823px] shrink-0 overflow-hidden bg-[#1e1e1e] shadow-[0_4px_4px_rgba(0,0,0,0.4)]">
            <div className="flex h-[49px] items-center justify-between bg-linear-to-r from-[#b0efff] to-[#14ceff] pt-1.5 pr-[37px] pl-[57px] text-[32px] tracking-[0.3px] text-white">
              <span>Low</span>
              <span>High</span>
            </div>
            <WorldMap />
          </section>
          <ClientsCard />
          <ForkCard />
        </aside>
      </main>
      <footer className="flex h-[42px] shrink-0 items-center justify-center rounded-b-[8px] bg-[linear-gradient(to_right,#00ccff_40px,transparent_200px,transparent_3250px,#00ccff_3410px),linear-gradient(to_bottom,#00c8fa,#08b6e6)] pt-1.5 pr-1 text-[24px] font-bold text-[#e8fbff]">
        Built by ETC Cooperative.
      </footer>
      <div className="pointer-events-none absolute top-[117px] left-[2286px] h-[1589px] w-[1154px] rounded-[38px] border-[9px] border-[#66ff00]" />
    </div>
  );
}
